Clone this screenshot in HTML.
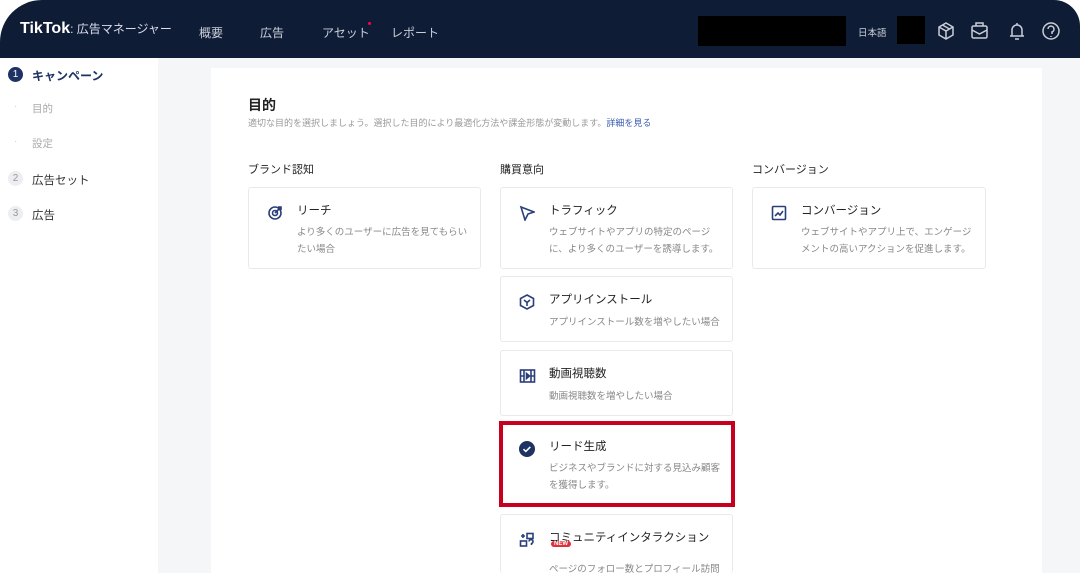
<!DOCTYPE html>
<html style="width:1080px;height:573px;overflow:hidden"><head><meta charset="utf-8"><style>
*{margin:0;padding:0;box-sizing:border-box}
body{width:1080px;height:573px;overflow:hidden;background:#fff;font-family:"Liberation Sans","Noto Sans CJK JP",sans-serif;position:relative}
.hdr{position:absolute;left:0;top:0;width:1080px;height:58px;background:#0f1c36;border-radius:42px 26px 0 0}
.abs{position:absolute}
.nav{color:#c9ced8;font-size:12px;top:24px}
.side{position:absolute;left:0;top:58px;width:158px;height:515px;background:#fff}
.gray{position:absolute;left:158px;top:58px;width:922px;height:515px;background:#f5f6f8}
.main{position:absolute;left:211px;top:68px;width:831px;height:505px;background:#fff}
.card{position:absolute;background:#fff;border:1px solid #e8e9ec;border-radius:3px}
.t{position:absolute;left:48px;top:14px;font-size:11.5px;color:#222}
.d{position:absolute;left:48px;top:36px;font-size:9.5px;color:#888;line-height:17px;width:175px}
.ic{position:absolute;left:18px;top:17px}
.colh{font-size:11px;color:#222;top:161px}
</style></head><body>
<div class="side">
 <div class="abs" style="left:8px;top:9px;width:15px;height:15px;border-radius:50%;background:#1e3364;color:#fff;font-size:10px;text-align:center;line-height:15px">1</div>
 <div class="abs" style="left:32px;top:9px;font-size:12px;color:#1e3364;font-weight:bold">キャンペーン</div>
 <div class="abs" style="left:14px;top:43px;font-size:10px;color:#ccc">·</div>
 <div class="abs" style="left:32px;top:43px;font-size:10.5px;color:#aaa">目的</div>
 <div class="abs" style="left:14px;top:78px;font-size:10px;color:#ccc">·</div>
 <div class="abs" style="left:32px;top:78px;font-size:10.5px;color:#aaa">設定</div>
 <div class="abs" style="left:8px;top:113px;width:15px;height:15px;border-radius:50%;background:#eceef2;color:#999;font-size:10px;text-align:center;line-height:15px">2</div>
 <div class="abs" style="left:32px;top:114px;font-size:11.5px;color:#333">広告セット</div>
 <div class="abs" style="left:8px;top:148px;width:15px;height:15px;border-radius:50%;background:#eceef2;color:#999;font-size:10px;text-align:center;line-height:15px">3</div>
 <div class="abs" style="left:32px;top:149px;font-size:11.5px;color:#333">広告</div>
</div>
<div class="gray"></div>
<div class="main"></div>
<div class="hdr">
 <div class="abs" style="left:20px;top:20px;color:#fff;font-weight:bold;font-size:16px">TikTok<span style="font-weight:normal;font-size:12px;color:#dde">: 広告マネージャー</span></div>
 <div class="abs nav" style="left:199px">概要</div>
 <div class="abs nav" style="left:260px">広告</div>
 <div class="abs nav" style="left:322px">アセット</div>
 <div class="abs" style="left:368px;top:22px;width:3px;height:3px;border-radius:50%;background:#f04"></div>
 <div class="abs nav" style="left:391px">レポート</div>
 <div class="abs" style="left:698px;top:16px;width:148px;height:30px;background:#000"></div>
 <div class="abs" style="left:858px;top:25px;font-size:9.5px;color:#c9ced8">日本語</div>
 <div class="abs" style="left:897px;top:16px;width:28px;height:28px;background:#000"></div>
 <svg class="abs" style="left:936px;top:21px" width="125" height="20" fill="none" stroke="#c9ced8" stroke-width="1.5">
  <path d="M10 2l7 4v8l-7 4-7-4V6z M3 6l7 4 7-4 M10 10v8 M6.5 4l7 4"/>
  <rect x="36" y="5" width="15" height="12" rx="1.5"/><path d="M40 5V2h7v3 M36 9l7.5 4 7.5-4"/>
  <path d="M76 15V9a5 5 0 0 1 10 0v6 M74 15h14 M79 18h4 M81 2v2"/>
  <circle cx="115" cy="10" r="8"/><path d="M112 8a3 3 0 1 1 4 3v2 M115 15v1"/>
 </svg>
</div>
<div class="abs" style="left:248px;top:95px;font-size:14px;color:#222;font-weight:bold">目的</div>
<div class="abs" style="left:248px;top:116px;font-size:9px;color:#999">適切な目的を選択しましょう。選択した目的により最適化方法や課金形態が変動します。<span style="color:#3a5bb0">詳細を見る</span></div>
<div class="abs colh" style="left:248px">ブランド認知</div>
<div class="abs colh" style="left:500px">購買意向</div>
<div class="abs colh" style="left:752px">コンバージョン</div>

<div class="card" style="left:248px;top:187px;width:233px;height:82px">
 <svg class="ic" width="16" height="16" fill="none" stroke="#2a3f7a" stroke-width="1.6"><circle cx="8" cy="8" r="6"/><circle cx="8" cy="8" r="2.5"/><path d="M8 8l6-6 M11 2h3v3"/></svg>
 <div class="t">リーチ</div><div class="d">より多くのユーザーに広告を見てもらいたい場合</div></div>
<div class="card" style="left:500px;top:187px;width:233px;height:82px">
 <svg class="ic" width="16" height="16" fill="none" stroke="#2a3f7a" stroke-width="1.6"><path d="M2 2l13 5-6 2-3 6z"/></svg>
 <div class="t">トラフィック</div><div class="d">ウェブサイトやアプリの特定のページに、より多くのユーザーを誘導します。</div></div>
<div class="card" style="left:752px;top:187px;width:234px;height:82px">
 <svg class="ic" width="16" height="16" fill="none" stroke="#2a3f7a" stroke-width="1.6"><rect x="1.5" y="1.5" width="13" height="13" rx="1"/><path d="M4 11l3-3 2 2 3-4"/></svg>
 <div class="t">コンバージョン</div><div class="d">ウェブサイトやアプリ上で、エンゲージメントの高いアクションを促進します。</div></div>
<div class="card" style="left:500px;top:276px;width:233px;height:66px">
 <svg class="ic" width="16" height="16" fill="none" stroke="#2a3f7a" stroke-width="1.6"><path d="M8 1l6.5 3.5v7L8 15l-6.5-3.5v-7z M5 6l3 2.5L11 6 M8 8.5V12"/></svg>
 <div class="t">アプリインストール</div><div class="d" style="top:37px">アプリインストール数を増やしたい場合</div></div>
<div class="card" style="left:500px;top:350px;width:233px;height:66px">
 <svg class="ic" width="17" height="16" fill="none" stroke="#2a3f7a" stroke-width="1.6"><rect x="1.5" y="2" width="14" height="12"/><path d="M5 2v12 M12 2v12 M1.5 8h3.5 M12 8h3.5"/><path d="M7.5 5.5v5l3-2.5z" fill="#2a3f7a"/></svg>
 <div class="t">動画視聴数</div><div class="d" style="top:37px">動画視聴数を増やしたい場合</div></div>
<div class="card" style="left:500px;top:423px;width:233px;height:82px">
 <svg class="ic" style="top:17px" width="16" height="16"><circle cx="8" cy="8" r="8" fill="#1e3364"/><path d="M4.5 8.2l2.3 2.2 4.5-4.5" stroke="#fff" stroke-width="1.6" fill="none"/></svg>
 <div class="t">リード生成</div><div class="d">ビジネスやブランドに対する見込み顧客を獲得します。</div></div>
<div class="abs" style="left:499px;top:421px;width:236px;height:86px;border:4px solid #c8001f"></div>
<div class="card" style="left:500px;top:514px;width:233px;height:59px;border-bottom:none;overflow:hidden">
 <svg class="ic" width="16" height="16" fill="none" stroke="#2a3f7a" stroke-width="1.6"><rect x="8" y="1.5" width="6" height="5"/><rect x="1.5" y="9" width="6" height="5"/><path d="M4 2v4 M2 4h4 M10 9.5a2 2 0 1 1 2.5 2v1.5"/></svg>
 <div class="t">コミュニティインタラクション</div>
 <div class="abs" style="left:50px;top:26px;background:#e0303a;color:#fff;font-size:6px;padding:0 3px;border-radius:4px;font-weight:bold">NEW</div>
 <div class="d" style="top:46px">ページのフォロー数とプロフィール訪問</div></div>
</body></html>
